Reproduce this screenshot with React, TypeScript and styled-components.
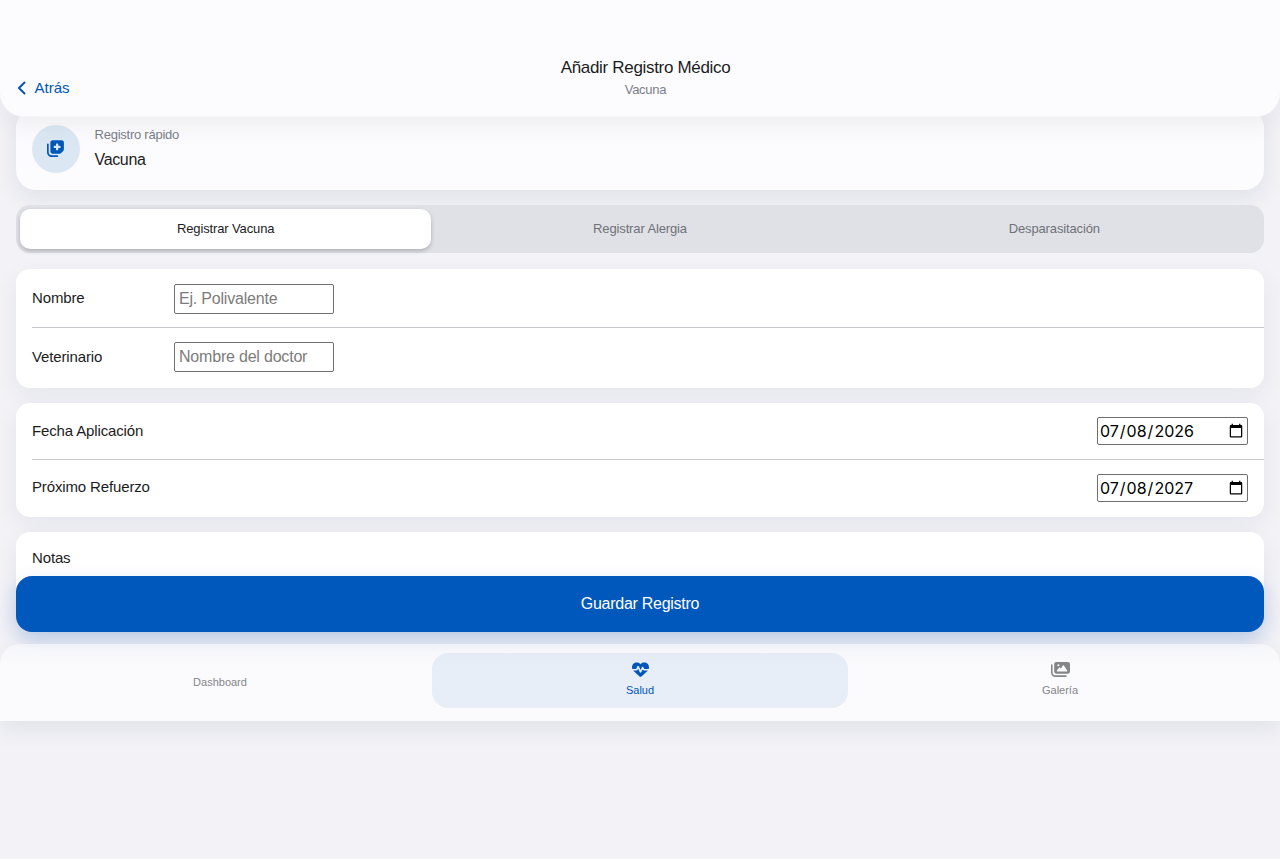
import React, { useState } from "react";
import styled, { createGlobalStyle, css } from "styled-components";
import { FaHeartPulse, FaImages, FaNotesMedical } from "react-icons/fa6";

const Global = createGlobalStyle`
  * { box-sizing: border-box; }
  html { background: #fff; }
  body { margin: 0; font-family: "Liberation Sans", Arial, sans-serif; color: #1c1c1e; }
  input, button { font-family: inherit; }
`;

const Page = styled.div`
  height: 859px;
  display: flex;
  flex-direction: column;
  background: #f2f2f7;
`;

const Header = styled.header`
  position: relative;
  z-index: 3;
  flex: none;
  height: 117px;
  padding: 56px 16px 0;
  display: grid;
  grid-template-columns: 1fr auto 1fr;
  align-items: start;
  background: #fcfcfe;
  border-radius: 0 0 24px 24px;
  border-bottom: 1px solid #f6f6f9;
  box-shadow: 0 8px 24px rgba(60, 60, 80, 0.08);
`;

const Back = styled.button`
  display: flex;
  align-items: center;
  gap: 6.5px;
  margin-top: 22px;
  padding: 0;
  height: 20px;
  border: 0;
  background: none;
  color: #0057b8;
  font-size: 15px;
  line-height: 18px;
`;

const Heading = styled.div`
  padding-left: 11px;
  text-align: center;
`;

const Title = styled.h1`
  margin: 0;
  font-size: 17px;
  font-weight: 400;
  line-height: 23px;
  letter-spacing: -0.32px;
`;

const Subtitle = styled.p`
  margin: 3px 0 0;
  font-size: 13px;
  line-height: 16px;
  letter-spacing: -0.25px;
  color: #7b7e8a;
`;

const Content = styled.main`
  flex: none;
  height: 536px;
  margin-top: -9px;
  padding: 0 16px;
  display: flex;
  flex-direction: column;
`;

const Summary = styled.section`
  flex: none;
  height: 82px;
  padding: 0 16px;
  display: flex;
  gap: 14.5px;
  align-items: center;
  background: #fcfcfe;
  border-radius: 20px;
  box-shadow: 0 8px 24px rgba(30, 35, 65, 0.08);
`;

const Badge = styled.div`
  width: 48px;
  height: 48px;
  border-radius: 50%;
  display: grid;
  place-items: center;
  padding: 0 1px 2px 0;
  background: #dbe8f4;
  color: #0057b8;
`;

const SmallLabel = styled.div`
  font-size: 13px;
  line-height: 20px;
  letter-spacing: -0.24px;
  color: #7b7e8a;
`;

const Kind = styled.div`
  margin: 4px 0 2px;
  font-size: 16px;
  line-height: 22px;
  letter-spacing: -0.35px;
`;

const Segments = styled.div`
  flex: none;
  display: grid;
  grid-template-columns: repeat(3, 1fr);
  gap: 3px;
  margin-top: 15px;
  padding: 4px;
  height: 48px;
  background: #e0e1e6;
  border-radius: 14px;
`;

const Segment = styled.button<{ $active: boolean }>`
  border: 0;
  border-radius: 10px;
  padding: 0 0 2px;
  font-size: 13px;
  letter-spacing: -0.13px;
  color: #6f7179;
  background: transparent;
  ${(p) => p.$active && css`
    background: #fff;
    color: #1c1c1e;
    box-shadow: 0 2px 4px rgba(0, 0, 0, 0.22);
  `}
`;

const Card = styled.section<{ $gap?: number; $height?: number }>`
  flex: none;
  height: ${(p) => (p.$height ? `${p.$height}px` : "auto")};
  margin-top: ${(p) => p.$gap ?? 15}px;
  padding-left: 16px;
  background: #fff;
  border-radius: 14px;
  box-shadow: 0 8px 24px rgba(30, 30, 90, 0.06);
`;

const Row = styled.label<{ $height: number; $top?: number; $bottom?: number; $line?: boolean }>`
  display: flex;
  align-items: center;
  height: ${(p) => p.$height}px;
  padding: ${(p) => p.$top ?? 0}px 16px ${(p) => p.$bottom ?? 0}px 0;
  border-bottom: ${(p) => (p.$line ? "1px solid #c9cacd" : "0")};
  font-size: 15px;
  letter-spacing: -0.14px;
`;

const Name = styled.span<{ $raise?: number }>`
  width: 142px;
  padding-bottom: ${(p) => p.$raise ?? 2}px;
`;

const TextInput = styled.input`
  width: 160px;
  height: 30px;
  padding: 1px 4px;
  border: 1px solid #6f6f6f;
  border-radius: 2px;
  font-size: 16px;
  letter-spacing: -0.2px;
  &::placeholder { color: #7c7c7c; }
`;

const DateInput = styled.input`
  width: 151px;
  height: 28px;
  margin-left: auto;
  padding: 0 1px 1px 1px;
  border: 1px solid #6f6f6f;
  border-radius: 2px;
  background: #fff;
  color: #000;
  font-family: Inter, "Liberation Sans", sans-serif;
  font-size: 16px;
  letter-spacing: 0;
`;

const Save = styled.button`
  position: relative;
  z-index: 4;
  flex: none;
  height: 56px;
  margin: -68px 16px 12px;
  border: 0;
  border-radius: 16px;
  background: #0057bc;
  color: #fff;
  font-size: 16px;
  letter-spacing: -0.27px;
  box-shadow: 0 8px 20px rgba(0, 87, 188, 0.22);
`;

const Tabs = styled.nav`
  position: relative;
  z-index: 5;
  flex: none;
  display: grid;
  grid-template-columns: repeat(3, 1fr);
  column-gap: 4px;
  height: 77px;
  padding: 9px 12px 13px;
  background: linear-gradient(rgba(252, 252, 254, 0.5), rgba(252, 252, 254, 0.88) 24px);
  border-radius: 20px 20px 0 0;
  box-shadow: 0 8px 24px rgba(30, 35, 65, 0.08);
`;

const Tab = styled.button<{ $active?: boolean }>`
  display: flex;
  flex-direction: column;
  align-items: center;
  justify-content: center;
  padding: 2px 0 0;
  border: 0;
  border-radius: 16px;
  background: ${(p) => (p.$active ? "rgba(0, 87, 184, 0.08)" : "transparent")};
  color: ${(p) => (p.$active ? "#0057b8" : "#85868a")};
  font-size: 11px;
  line-height: 14px;
`;

const TabIcon = styled.span`
  display: grid;
  place-items: center;
  height: 19px;
  margin: -6px 0 4px;
`;

export default function App() {
  const [kind, setKind] = useState(0);
  return (
    <Page>
      <Global />
      <Header>
        <Back>
          <svg width="12" height="14" viewBox="0 0 12 14" fill="none" stroke="currentColor" strokeWidth="2" strokeLinecap="round" strokeLinejoin="round"><path d="M8.5 1.5 3 7l5.5 5.5" /></svg>
          <span>Atrás</span>
        </Back>
        <Heading><Title>Añadir Registro Médico</Title><Subtitle>Vacuna</Subtitle></Heading>
      </Header>
      <Content>
        <Summary>
          <Badge><FaNotesMedical size={18} /></Badge>
          <div><SmallLabel>Registro rápido</SmallLabel><Kind>Vacuna</Kind></div>
        </Summary>
        <Segments>
          {["Registrar Vacuna", "Registrar Alergia", "Desparasitación"].map((t, i) => (
            <Segment key={t} $active={i === kind} onClick={() => setKind(i)}>{t}</Segment>
          ))}
        </Segments>
        <Card $gap={16}>
          <Row $height={59} $top={2} $line><Name $raise={4}>Nombre</Name><TextInput placeholder="Ej. Polivalente" /></Row>
          <Row $height={60} $bottom={2}><Name>Veterinario</Name><TextInput placeholder="Nombre del doctor" /></Row>
        </Card>
        <Card>
          <Row $height={57} $line><Name>Fecha Aplicación</Name><DateInput type="date" defaultValue="2026-07-08" /></Row>
          <Row $height={57} $bottom={1}><Name $raise={3}>Próximo Refuerzo</Name><DateInput type="date" defaultValue="2027-07-08" /></Row>
        </Card>
        <Card $height={90}><Row $height={53}><Name>Notas</Name></Row></Card>
      </Content>
      <Save>Guardar Registro</Save>
      <Tabs>
        <Tab>Dashboard</Tab>
        <Tab $active><TabIcon><FaHeartPulse size={17} /></TabIcon>Salud</Tab>
        <Tab><TabIcon><FaImages size={19} /></TabIcon>Galería</Tab>
      </Tabs>
    </Page>
  );
}
